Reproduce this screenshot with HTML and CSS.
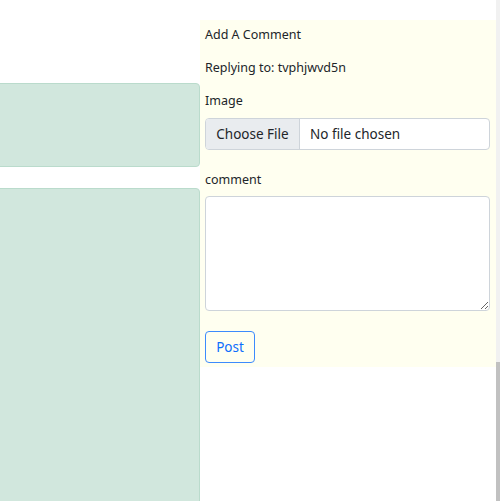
FILE: index.html
```html
<!DOCTYPE html>
<html lang="en">
<head>
<meta charset="utf-8">
<title>Add A Comment</title>
<link rel="stylesheet" href="styles.css">
</head>
<body>
<div class="page">
  <div class="feed">
    <div class="card card-short"></div>
    <div class="card card-tall"></div>
  </div>
  <div class="side">
    <form class="comment-panel">
      <p class="line">Add A Comment</p>
      <p class="line">Replying to: tvphjwvd5n</p>
      <label class="field-label">Image</label>
      <div class="file-control">
        <span class="file-btn">Choose File</span>
        <span class="file-name">No file chosen</span>
      </div>
      <label class="field-label field-label-gap">comment</label>
      <textarea class="textarea"></textarea>
      <button type="button" class="btn-post">Post</button>
    </form>
  </div>
  <div class="scrollbar">
    <div class="scroll-thumb"></div>
  </div>
</div>
</body>
</html>
```
FILE: styles.css
```css
* { box-sizing: border-box; }
html, body { margin: 0; padding: 0; }
body {
  font-family: "Noto Sans", "Open Sans", sans-serif;
  color: #212529;
  background: #fff;
  overflow: hidden;
}
.page {
  display: flex;
  width: 500px;
  height: 501px;
}
.feed {
  width: 200px;
  flex: none;
  overflow: hidden;
  padding-top: 83px;
  display: flex;
  flex-direction: column;
  gap: 21px;
}
.card {
  flex: none;
  margin-left: -10px;
  width: 210px;
  background: #d1e7dd;
  border: 1px solid #badbcc;
  border-radius: 4px;
}
.card-short { height: 84px; }
.card-tall { height: 340px; }
.side {
  width: 296px;
  flex: none;
  padding-top: 20px;
}
.comment-panel {
  background: #fffff0;
  padding: 4px 6px 4px 5px;
  display: flex;
  flex-direction: column;
  align-items: flex-start;
}
.line {
  margin: 0 0 12px;
  font-size: 12.5px;
  line-height: 21px;
}
.field-label {
  font-size: 12.5px;
  line-height: 21px;
  margin-bottom: 7px;
}
.field-label-gap { margin-top: 19px; margin-bottom: 6px; }
.file-control {
  width: 285px;
  height: 32px;
  display: flex;
  border: 1px solid #ced4da;
  border-radius: 4px;
  background: #fff;
  overflow: hidden;
  font-size: 13.5px;
  line-height: 30px;
}
.file-btn {
  width: 94px;
  background: #e9ecef;
  border-right: 1px solid #ced4da;
  text-align: center;
}
.file-name { padding-left: 10px; }
.textarea {
  display: block;
  width: 285px;
  height: 115px;
  border: 1px solid #ced4da;
  border-radius: 4px;
  background: #fff;
  margin: 0;
  resize: vertical;
}
.btn-post {
  margin-top: 20px;
  width: 50px;
  height: 32px;
  border: 1px solid #3d8bfd;
  border-radius: 4px;
  background: transparent;
  color: #0d6efd;
  font-family: inherit;
  font-size: 13.5px;
  padding: 0;
}
.scrollbar {
  width: 4px;
  flex: none;
  background: #f1f1f1;
  display: flex;
  flex-direction: column;
  justify-content: flex-end;
}
.scroll-thumb {
  height: 139px;
  background: #c1c1c1;
}
```
